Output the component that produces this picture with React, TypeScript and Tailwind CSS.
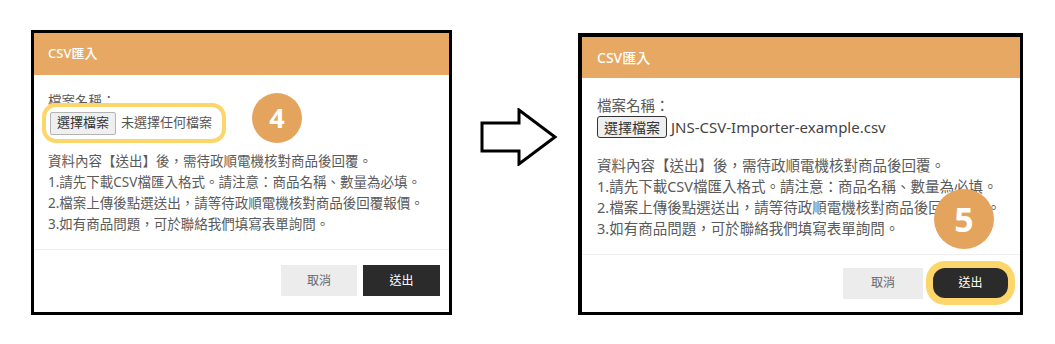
const font = { fontFamily: '"Noto Sans", "Noto Sans CJK TC", sans-serif' };

const notes = [
  '資料內容【送出】後，需待政順電機核對商品後回覆。',
  '1.請先下載CSV檔匯入格式。請注意：商品名稱、數量為必填。',
  '2.檔案上傳後點選送出，請等待政順電機核對商品後回覆報價。',
  '3.如有商品問題，可於聯絡我們填寫表單詢問。',
];

function Arrow() {
  return (
    <svg width="78" height="58" viewBox="0 0 78 58" className="ml-[28px] mt-[108px] shrink-0">
      <polygon
        points="2,15 39,15 39,2 75,29 39,56 39,43 2,43"
        fill="white"
        stroke="black"
        strokeWidth="3"
        strokeLinejoin="miter"
      />
    </svg>
  );
}

function Badge({ n, className }: { n: string; className: string }) {
  return (
    <div
      className={
        'absolute rounded-full bg-[#e4a45e] text-white font-bold flex items-center justify-center ' +
        className
      }
    >
      {n}
    </div>
  );
}

// step 4: nothing chosen yet, file input is highlighted
function StepFour() {
  return (
    <div className="relative ml-[31px] mt-[30px] w-[421px] h-[285px] shrink-0 border-[3px] border-black bg-white flex flex-col">
      <div className="h-[42px] bg-[#e6a862] pl-[14px] flex items-center text-[13px] font-medium text-white">
        CSV匯入
      </div>

      <div className="px-[14px] pt-[17px] text-[13.5px] text-[#5a5a5a]">
        <div className="leading-[18px]">檔案名稱：</div>
        <div className="relative -mt-[7px] -ml-[6px] w-[184px] h-[40px] rounded-[14px] border-[4px] border-[#fdd66b] bg-white flex items-center pl-[4px]">
          <span className="h-[23px] px-[6px] flex items-center border border-[#b5b5b5] rounded-[2px] bg-[#efefef] text-[13px] text-[#333]">
            選擇檔案
          </span>
          <span className="ml-[5px] text-[13px] text-[#555]">未選擇任何檔案</span>
        </div>

        <div className="mt-[8px] leading-[21px]">
          {notes.map((t) => (
            <div key={t}>{t}</div>
          ))}
        </div>
      </div>

      <div className="mt-[14px] border-t border-[#eeeeee] flex justify-end gap-[6px] pt-[15px] pr-[9px]">
        <button className="w-[76px] h-[31px] bg-[#ececec] text-[12px] text-[#666]">取消</button>
        <button className="w-[77px] h-[31px] bg-[#2b2b2b] text-[12px] text-white">送出</button>
      </div>

      <Badge n="4" className="left-[218px] top-[60px] w-[50px] h-[50px] text-[27px]" />
    </div>
  );
}

// step 5: file picked, submit button highlighted
function StepFive() {
  return (
    <div className="relative ml-[20px] mt-[33px] w-[445px] h-[282px] shrink-0 border-[4px] border-r-[3px] border-b-[3px] border-black bg-white flex flex-col">
      <div className="h-[41px] bg-[#e6a862] pl-[15px] flex items-center text-[14px] font-medium text-white">
        CSV匯入
      </div>

      <div className="px-[15px] pt-[17px] text-[14.5px] text-[#5a5a5a]">
        <div className="leading-[20px]">檔案名稱：</div>
        <div className="mt-[1px] flex items-center">
          <span className="h-[22px] px-[6px] flex items-center border-[1.5px] border-[#333] rounded-[3px] bg-[#efefef] text-[14px] text-[#333]">
            選擇檔案
          </span>
          <span className="ml-[4px] text-[15px] text-[#444]">JNS-CSV-Importer-example.csv</span>
        </div>

        <div className="mt-[16px] leading-[21px]">
          {notes.map((t) => (
            <div key={t}>{t}</div>
          ))}
        </div>
      </div>

      <div className="mt-[15px] border-t border-[#eeeeee] flex justify-end items-center gap-[10px] pt-[13px] pr-[12px]">
        <button className="w-[80px] h-[31px] bg-[#ececec] text-[12px] text-[#666]">取消</button>
        <button className="w-[75px] h-[30px] rounded-[12px] bg-[#2b2b2b] text-[12px] text-white ring-[7px] ring-[#fdd66b]">
          送出
        </button>
      </div>

      <Badge n="5" className="left-[352px] top-[152px] w-[60px] h-[60px] text-[34px]" />
    </div>
  );
}

export default function App() {
  return (
    <div lang="zh-Hant-TW" className="w-[1055px] h-[344px] bg-white flex items-start" style={font}>
      <StepFour />
      <Arrow />
      <StepFive />
    </div>
  );
}
